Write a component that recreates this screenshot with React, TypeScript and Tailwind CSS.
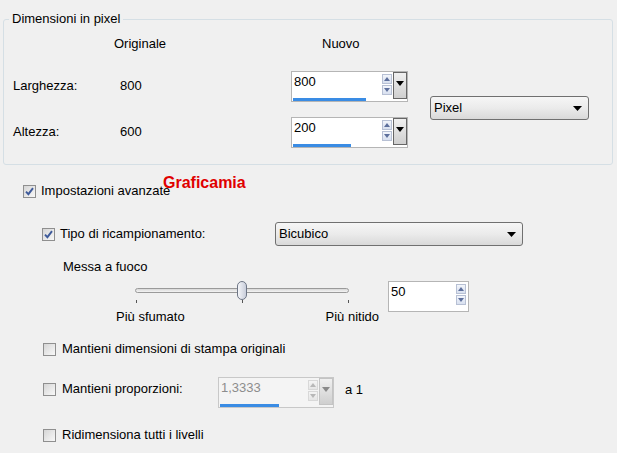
import React from "react";

type SpinProps = {
  value: string;
  width: string;
  bar?: string;
  disabled?: boolean;
  drop?: boolean;
};

function Check({ checked }: { checked?: boolean }) {
  return (
    <span className="flex h-[13px] w-[13px] shrink-0 items-center justify-center border border-[#8f8f8f] bg-white">
      <span className="flex h-[11px] w-[11px] items-center justify-center bg-gradient-to-br from-[#d6d6d6] to-[#f8f8f8]">
        {checked && (
          <svg width="9" height="9" viewBox="0 0 9 9">
            <path d="M1 4.6 L3.4 7.2 L8 1.2" fill="none" stroke="#3e5a9a" strokeWidth="1.9" />
          </svg>
        )}
      </span>
    </span>
  );
}

function Arrows({ disabled }: { disabled?: boolean }) {
  const fill = disabled ? "#b8b8b8" : "#5d6f9c";
  const box = disabled ? "border-[#d8d8d8] from-[#f4f4f4] to-[#e6e6e6]" : "border-[#b7c0d4] from-[#f2f5fb] to-[#d8e0ef]";
  return (
    <div className="flex w-[10px] flex-col gap-px pt-[2px]">
      <div className={`flex h-[10px] items-center justify-center border bg-gradient-to-b ${box}`}>
        <svg width="6" height="4" viewBox="0 0 6 4">
          <path d="M0 4 L3 0 L6 4 Z" fill={fill} />
        </svg>
      </div>
      <div className={`flex h-[10px] items-center justify-center border bg-gradient-to-b ${box}`}>
        <svg width="6" height="4" viewBox="0 0 6 4">
          <path d="M0 0 L6 0 L3 4 Z" fill={fill} />
        </svg>
      </div>
    </div>
  );
}

function Spin({ value, width, bar, disabled, drop }: SpinProps) {
  return (
    <div
      className={`flex h-[31px] shrink-0 flex-col border ${
        disabled ? "border-[#c8c8c8] bg-[#f4f4f4]" : "border-[#b5b5b5] bg-white"
      } ${width}`}
    >
      <div className="flex h-[26px]">
        <span className={`flex-1 pl-[2px] pt-[3px] leading-[14px] ${disabled ? "text-[#8d8d8d]" : "text-black"}`}>
          {value}
        </span>
        <Arrows disabled={disabled} />
        {drop ? (
          <div
            className={`ml-px flex h-[27px] w-[14px] justify-center border bg-gradient-to-b from-[#f0f0f0] to-[#cfcfcf] pt-[8px] ${
              disabled ? "border-[#c4c4c4]" : "border-[#666666]"
            }`}
          >
            <svg width="8" height="5" viewBox="0 0 8 5">
              <path d="M0 0 L8 0 L4 5 Z" fill={disabled ? "#8a8a8a" : "#000"} />
            </svg>
          </div>
        ) : (
          <div className="w-[2px]" />
        )}
      </div>
      {bar && <div className={`ml-px h-[3px] bg-[#3a8ce4] ${bar}`} />}
    </div>
  );
}

function Combo({ label, width }: { label: string; width: string }) {
  return (
    <div
      className={`flex h-[24px] items-center justify-between rounded-[3px] border border-[#707070] bg-gradient-to-b from-[#f6f6f6] via-[#ebebeb] to-[#d9d9d9] pl-[3px] pr-[6px] ${width}`}
    >
      <span className="leading-[14px]">{label}</span>
      <svg width="9" height="5" viewBox="0 0 9 5">
        <path d="M0 0 L9 0 L4.5 5 Z" fill="#000" />
      </svg>
    </div>
  );
}

export default function App() {
  return (
    <div className="relative h-[453px] w-[617px] overflow-hidden bg-[#f0f0f0] pt-[19px] font-['Liberation_Sans',Arial,sans-serif] text-[13px] text-black">
      {/* dimensioni in pixel */}
      <div className="relative ml-[3px] h-[146px] w-[610px] rounded-[3px] border border-[#d5dfe5]">
        <span className="absolute left-[5px] top-[-8px] bg-[#f0f0f0] px-[3px] leading-[14px]">Dimensioni in pixel</span>
        <div className="flex pl-[110px] pt-[17px] leading-[14px]">
          <span className="w-[208px]">Originale</span>
          <span>Nuovo</span>
        </div>
        <div className="mt-[19px] flex pl-[9px]">
          <div className="flex flex-col gap-[14px]">
            <div className="flex h-[32px] items-center">
              <span className="w-[107px]">Larghezza:</span>
              <span className="w-[171px]">800</span>
              <Spin value="800" width="w-[117px]" bar="w-[73px]" drop />
            </div>
            <div className="flex h-[32px] items-center">
              <span className="w-[107px]">Altezza:</span>
              <span className="w-[171px]">600</span>
              <Spin value="200" width="w-[117px]" bar="w-[58px]" drop />
            </div>
          </div>
          <div className="ml-[22px] mt-[26px]">
            <Combo label="Pixel" width="w-[159px]" />
          </div>
        </div>
      </div>

      <div className="mt-[19px] flex h-[14px] items-center gap-[5px] pl-[23px]">
        <Check checked />
        <span className="leading-[14px]">Impostazioni avanzate</span>
      </div>
      <span className="absolute left-[163px] top-[174px] text-[16px] font-bold leading-[18px] text-[#e00000]">Graficamia</span>

      <div className="mt-[24px] flex h-[24px] items-center pl-[42px]">
        <Check checked />
        <span className="ml-[5px] w-[215px] leading-[14px]">Tipo di ricampionamento:</span>
        <Combo label="Bicubico" width="w-[248px]" />
      </div>

      <div className="mt-[14px] pl-[63px] leading-[14px]">Messa a fuoco</div>

      <div className="mt-[7px] flex pl-[116px]">
        <div className="flex h-[43px] w-[263px] flex-col">
          <div className="relative ml-[19px] h-[19px] w-[214px]">
            <div className="mt-[7px] h-[5px] rounded-full border border-[#9a9a9a] bg-gradient-to-b from-[#d8d8d8] to-[#f4f4f4]" />
            <div className="absolute left-[102px] top-0 h-[19px] w-[10px] rounded-full border border-[#6e7686] bg-gradient-to-r from-[#f4f5f8] to-[#c9cedb]" />
          </div>
          <div className="ml-[20px] flex w-[213px] justify-between">
            <span className="mt-[1px] h-[3px] w-px bg-[#555]" />
            <span className="mt-[1px] h-[3px] w-px bg-[#555]" />
            <span className="mt-[1px] h-[3px] w-px bg-[#555]" />
          </div>
          <div className="mt-[7px] flex justify-between leading-[14px]">
            <span>Più sfumato</span>
            <span>Più nitido</span>
          </div>
        </div>
        <div className="ml-[9px]">
          <Spin value="50" width="w-[81px]" />
        </div>
      </div>

      <div className="mt-[18px] flex h-[14px] items-center gap-[6px] pl-[43px]">
        <Check />
        <span className="leading-[14px]">Mantieni dimensioni di stampa originali</span>
      </div>

      <div className="mt-[21px] flex items-start pl-[43px]">
        <div className="mt-[5px] flex items-center gap-[6px]">
          <Check />
          <span className="w-[156px] leading-[14px]">Mantieni proporzioni:</span>
        </div>
        <Spin value="1,3333" width="w-[116px]" bar="w-[59px]" disabled drop />
        <span className="ml-[11px] mt-[6px] leading-[14px]">a 1</span>
      </div>

      <div className="mt-[20px] flex h-[14px] items-center gap-[6px] pl-[43px]">
        <Check />
        <span className="leading-[14px]">Ridimensiona tutti i livelli</span>
      </div>
    </div>
  );
}
